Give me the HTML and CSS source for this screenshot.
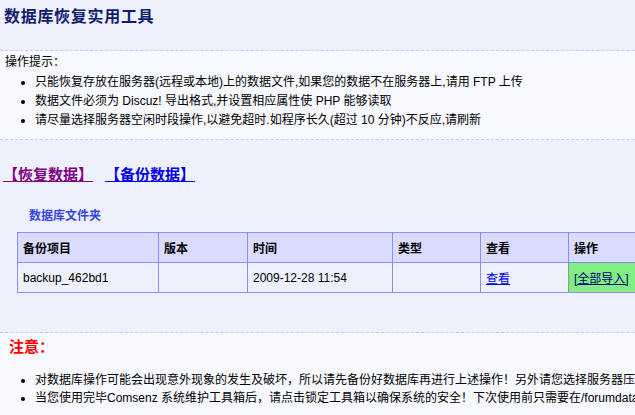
FILE: index.html
```html
<!DOCTYPE html>
<html lang="zh-CN">
<head>
<meta charset="utf-8">
<title>数据库恢复实用工具</title>
<link rel="stylesheet" href="styles.css">
</head>
<body>
<div class="page">
  <header class="head">
    <h1 class="title">数据库恢复实用工具</h1>
  </header>
  <section class="tips">
    <div class="tips-label">操作提示：</div>
    <ul class="list">
      <li>只能恢复存放在服务器(远程或本地)上的数据文件,如果您的数据不在服务器上,请用 FTP 上传</li>
      <li>数据文件必须为 Discuz! 导出格式,并设置相应属性使 PHP 能够读取</li>
      <li>请尽量选择服务器空闲时段操作,以避免超时.如程序长久(超过 10 分钟)不反应,请刷新</li>
    </ul>
  </section>
  <main class="main">
    <nav class="tabs">
      <a class="tab visited" href="#restore">【恢复数据】</a>
      <a class="tab" href="#backup">【备份数据】</a>
    </nav>
    <h2 class="folder">数据库文件夹</h2>
    <table class="grid">
      <thead>
        <tr>
          <th class="c1">备份项目</th>
          <th class="c2">版本</th>
          <th class="c3">时间</th>
          <th class="c4">类型</th>
          <th class="c5">查看</th>
          <th class="c6">操作</th>
        </tr>
      </thead>
      <tbody>
        <tr>
          <td>backup_462bd1</td>
          <td></td>
          <td>2009-12-28 11:54</td>
          <td></td>
          <td class="view"><a class="link" href="#view">查看</a></td>
          <td class="op"><a class="op-link" href="#import">[全部导入]</a></td>
        </tr>
      </tbody>
    </table>
  </main>
  <section class="notes">
    <div class="notes-label">注意：</div>
    <ul class="list notes-list">
      <li>对数据库操作可能会出现意外现象的发生及破坏，所以请先备份好数据库再进行上述操作！另外请您选择服务器压力比较小的时候进行一些优化操作。</li>
      <li>当您使用完毕Comsenz 系统维护工具箱后，请点击锁定工具箱以确保系统的安全！下次使用前只需要在/forumdata/目录下删除tool.lock文件即可开始使用。</li>
    </ul>
  </section>
</div>
</body>
</html>
```
FILE: styles.css
```css
html, body {
  margin: 0;
  padding: 0;
  overflow: hidden;
  background: #f8f8ff;
}
body {
  font-family: "Liberation Sans", "Noto Sans CJK SC", sans-serif;
  font-size: 12px;
  color: #000;
}
.page {
  width: 900px;
}
.head {
  background: #eef0fd;
  height: 51px;
  border-bottom: 1px dashed #c4cbf4;
  box-sizing: border-box;
  padding: 5px 0 0 4px;
}
.title {
  margin: 0;
  font-family: "Noto Sans CJK SC", sans-serif;
  font-size: 16px;
  line-height: 20px;
  font-weight: bold;
  color: #111c6e;
  letter-spacing: 0.7px;
}
.tips {
  background: #f8f8ff;
  height: 89px;
  box-sizing: border-box;
  border-bottom: 1px dashed #c4cbf4;
  padding: 2px 0 0 5px;
}
.tips-label {
  line-height: 19px;
  margin-bottom: 1px;
}
.list {
  margin: 0;
  padding: 0 0 0 30px;
  list-style: disc;
  white-space: nowrap;
}
.list li {
  line-height: 19px;
}
.main {
  background: #eef0fd;
  height: 193px;
  box-sizing: border-box;
  border-bottom: 1px dashed #c4cbf4;
  padding: 24px 0 0 3px;
}
.tabs {
  display: flex;
  gap: 12px;
  line-height: 20px;
}
.tab {
  font-family: "Noto Sans CJK SC", sans-serif;
  font-size: 15px;
  font-weight: bold;
  color: #0000ee;
  text-decoration: underline;
  text-underline-offset: 1px;
}
.tab.visited {
  color: #800080;
}
.folder {
  margin: 23px 0 9px 26px;
  font-family: "Noto Sans CJK SC", sans-serif;
  font-size: 12px;
  line-height: 16px;
  font-weight: bold;
  color: #3444e6;
}
.grid {
  margin-left: 14px;
  border-collapse: separate;
  border-spacing: 0;
  table-layout: fixed;
  width: 640px;
  border-top: 1px solid #8c8cff;
  border-left: 1px solid #8c8cff;
}
.grid th,
.grid td {
  height: 30px;
  box-sizing: border-box;
  padding: 0 0 0 5px;
  border-right: 1px solid #8c8cff;
  border-bottom: 1px solid #8c8cff;
  text-align: left;
  vertical-align: middle;
  white-space: nowrap;
}
.grid th {
  background: #d9dbff;
  font-family: "Noto Sans CJK SC", sans-serif;
  font-weight: bold;
}
.grid td {
  background: #eef0fd;
}
.c1 { width: 141px; }
.c2 { width: 89px; }
.c3 { width: 145px; }
.c4 { width: 88px; }
.c5 { width: 88px; }
.c6 { width: 88px; }
.grid td.view {
  border-right-color: #8a9a8a;
}
.grid td.op {
  background: #80ee80;
}
.link {
  color: #0000ee;
}
.op-link {
  color: #00007a;
}
.notes {
  background: #f8f8ff;
  padding: 3px 0 20px 5px;
}
.notes-label {
  font-family: "Noto Sans CJK SC", sans-serif;
  font-size: 15px;
  line-height: 20px;
  font-weight: bold;
  color: #ff0000;
  padding-left: 4px;
  margin-bottom: 15px;
}
.notes-list li {
  line-height: 18px;
}
```
